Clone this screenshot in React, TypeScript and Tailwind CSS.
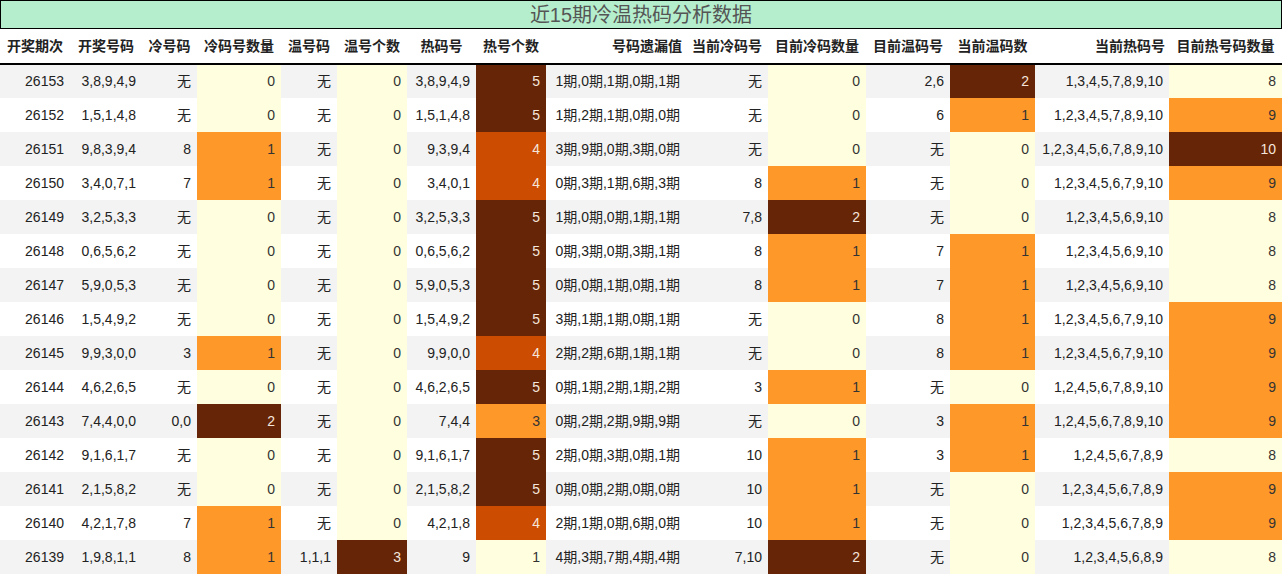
const headers = ["开奖期次","开奖号码","冷号码","冷码号数量","温号码","温号个数","热码号","热号个数","号码遗漏值","当前冷码号","目前冷码数量","目前温码号","当前温码数","当前热码号","目前热号码数量"];
const widths = [70,72,55,84,56,70,69,70,140,82,98,84,85,134,113];
const rows: string[][] = [
["26153","3,8,9,4,9","无","0","无","0","3,8,9,4,9","5","1期,0期,1期,0期,1期","无","0","2,6","2","1,3,4,5,7,8,9,10","8"],
["26152","1,5,1,4,8","无","0","无","0","1,5,1,4,8","5","1期,2期,1期,0期,0期","无","0","6","1","1,2,3,4,5,7,8,9,10","9"],
["26151","9,8,3,9,4","8","1","无","0","9,3,9,4","4","3期,9期,0期,3期,0期","无","0","无","0","1,2,3,4,5,6,7,8,9,10","10"],
["26150","3,4,0,7,1","7","1","无","0","3,4,0,1","4","0期,3期,1期,6期,3期","8","1","无","0","1,2,3,4,5,6,7,9,10","9"],
["26149","3,2,5,3,3","无","0","无","0","3,2,5,3,3","5","1期,0期,0期,1期,1期","7,8","2","无","0","1,2,3,4,5,6,9,10","8"],
["26148","0,6,5,6,2","无","0","无","0","0,6,5,6,2","5","0期,3期,0期,3期,1期","8","1","7","1","1,2,3,4,5,6,9,10","8"],
["26147","5,9,0,5,3","无","0","无","0","5,9,0,5,3","5","0期,0期,1期,0期,1期","8","1","7","1","1,2,3,4,5,6,9,10","8"],
["26146","1,5,4,9,2","无","0","无","0","1,5,4,9,2","5","3期,1期,1期,0期,1期","无","0","8","1","1,2,3,4,5,6,7,9,10","9"],
["26145","9,9,3,0,0","3","1","无","0","9,9,0,0","4","2期,2期,6期,1期,1期","无","0","8","1","1,2,3,4,5,6,7,9,10","9"],
["26144","4,6,2,6,5","无","0","无","0","4,6,2,6,5","5","0期,1期,2期,1期,2期","3","1","无","0","1,2,4,5,6,7,8,9,10","9"],
["26143","7,4,4,0,0","0,0","2","无","0","7,4,4","3","0期,2期,2期,9期,9期","无","0","3","1","1,2,4,5,6,7,8,9,10","9"],
["26142","9,1,6,1,7","无","0","无","0","9,1,6,1,7","5","2期,0期,3期,0期,1期","10","1","3","1","1,2,4,5,6,7,8,9","8"],
["26141","2,1,5,8,2","无","0","无","0","2,1,5,8,2","5","0期,0期,2期,0期,0期","10","1","无","0","1,2,3,4,5,6,7,8,9","9"],
["26140","4,2,1,7,8","7","1","无","0","4,2,1,8","4","2期,1期,0期,6期,0期","10","1","无","0","1,2,3,4,5,6,7,8,9","9"],
["26139","1,9,8,1,1","8","1","1,1,1","3","9","1","4期,3期,7期,4期,4期","7,10","2","无","0","1,2,3,4,5,6,8,9","8"],
];
const LY = "bg-[#ffffe0] text-[#333]";
const OR = "bg-[#fe9929] text-[#333]";
const RD = "bg-[#cc4c02] text-[#f5e6dc]";
const DK = "bg-[#662506] text-[#f5e6dc]";
function cellCls(ci: number, v: string): string | null {
  if (ci === 3 || ci === 10 || ci === 12) return v === "0" ? LY : v === "1" ? OR : DK;
  if (ci === 5) return v === "0" ? LY : DK;
  if (ci === 7) return v === "5" ? DK : v === "4" ? RD : v === "3" ? OR : LY;
  if (ci === 14) return v === "8" ? LY : v === "9" ? OR : DK;
  return null;
}
export default function App() {
  return (
    <div className="w-[1282px] h-[576px] overflow-hidden bg-white text-[14px] text-[#222]" style={{ fontFamily: '"Liberation Sans","Noto Sans CJK SC",sans-serif' }}>
      <div className="h-[29px] bg-[#b4eecd] border border-black flex items-center justify-center text-[20px] text-[#555]">近15期冷温热码分析数据</div>
      <table className="border-collapse table-fixed w-[1282px]">
        <colgroup>{widths.map((w, i) => <col key={i} style={{ width: w }} />)}</colgroup>
        <thead>
          <tr className="h-[35px] border-b-2 border-black">
            {headers.map((h, i) => (
              <th key={i} className={`font-bold text-[14px] whitespace-nowrap px-[4px] ${i === 8 || i === 13 ? "text-right" : "text-center"}`}>{h}</th>
            ))}
          </tr>
        </thead>
        <tbody>
          {rows.map((r, ri) => (
            <tr key={ri} className={`h-[34px] ${ri % 2 === 0 ? "bg-[#f3f3f3]" : "bg-white"}`}>
              {r.map((v, ci) => {
                const c = cellCls(ci, v);
                return (
                  <td key={ci} className={`text-right whitespace-nowrap pr-[6px] pl-[4px] ${c ?? ""} ${ci === 8 ? "text-left pl-[7px]" : ""}`}>{v}</td>
                );
              })}
            </tr>
          ))}
        </tbody>
      </table>
    </div>
  );
}
